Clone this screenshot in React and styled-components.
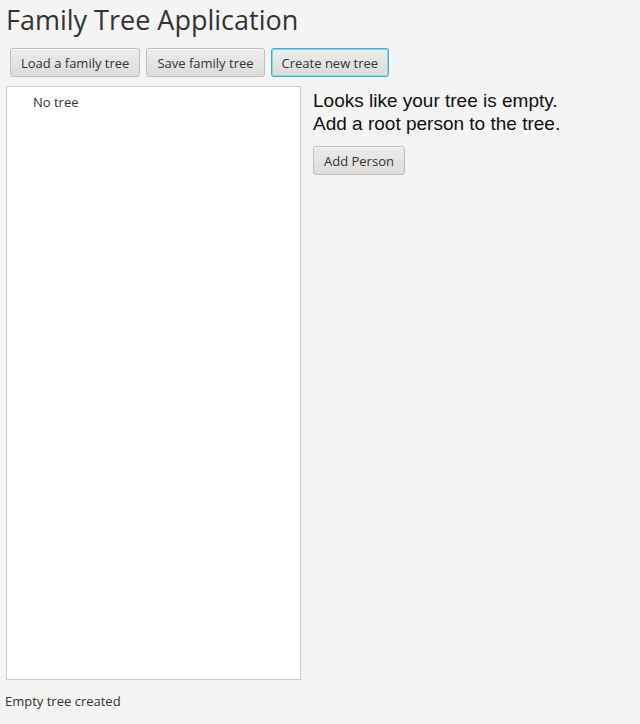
import React from 'react';
import styled, { createGlobalStyle } from 'styled-components';

const GlobalStyle = createGlobalStyle`
  html, body {
    margin: 0;
    padding: 0;
    background: #f4f4f4;
  }
  body {
    font-family: "Open Sans", "Noto Sans", sans-serif;
    color: #333;
  }
`;

const Window = styled.div`
  width: 640px;
  height: 724px;
  display: flex;
  flex-direction: column;
  background: #f4f4f4;
`;

const Title = styled.h1`
  margin: 0;
  padding: 2px 0 0 6px;
  height: 41px;
  box-sizing: border-box;
  font-family: "Open Sans", sans-serif;
  font-weight: 400;
  font-size: 27px;
  line-height: 36px;
  color: #333;
`;

const Toolbar = styled.div`
  display: flex;
  gap: 6px;
  padding: 7px 0 0 10px;
  height: 45px;
  box-sizing: border-box;
`;

const Button = styled.button`
  height: 29px;
  padding: 0 10px;
  box-sizing: border-box;
  font-family: "Open Sans", sans-serif;
  font-size: 13px;
  color: #333;
  background: linear-gradient(#ececec, #dcdcdc);
  border: 1px solid ${p => (p.$focused ? '#2eb3dd' : '#bdbdbd')};
  border-radius: 3px;
  box-shadow: ${p => (p.$focused ? '0 0 0 1px #8fd4ea inset' : 'inset 0 1px 0 #f6f6f6')};
  cursor: pointer;
  white-space: nowrap;
`;

const Body = styled.div`
  display: flex;
  flex: 1;
  gap: 12px;
  padding-left: 6px;
  min-height: 0;
`;

const TreePanel = styled.div`
  width: 295px;
  height: 594px;
  background: #fff;
  border: 1px solid #c9c9c9;
  box-sizing: border-box;
`;

const TreeItem = styled.div`
  padding: 6px 0 0 26px;
  font-size: 13px;
  line-height: 18px;
  color: #333;
`;

const Side = styled.div`
  display: flex;
  flex-direction: column;
  align-items: flex-start;
  padding-top: 3px;
`;

const Message = styled.p`
  margin: 0 0 11px;
  font-family: "Liberation Sans", Arial, sans-serif;
  font-size: 19px;
  line-height: 23px;
  color: #111;
`;

const Status = styled.div`
  height: 44px;
  padding: 12px 0 0 5px;
  box-sizing: border-box;
  font-size: 13px;
  color: #333;
`;

export default function App() {
  return (
    <>
      <GlobalStyle />
      <Window>
        <Title>Family Tree Application</Title>
        <Toolbar>
          <Button>Load a family tree</Button>
          <Button>Save family tree</Button>
          <Button $focused>Create new tree</Button>
        </Toolbar>
        <Body>
          <TreePanel>
            <TreeItem>No tree</TreeItem>
          </TreePanel>
          <Side>
            <Message>
              Looks like your tree is empty.
              <br />
              Add a root person to the tree.
            </Message>
            <Button>Add Person</Button>
          </Side>
        </Body>
        <Status>Empty tree created</Status>
      </Window>
    </>
  );
}
